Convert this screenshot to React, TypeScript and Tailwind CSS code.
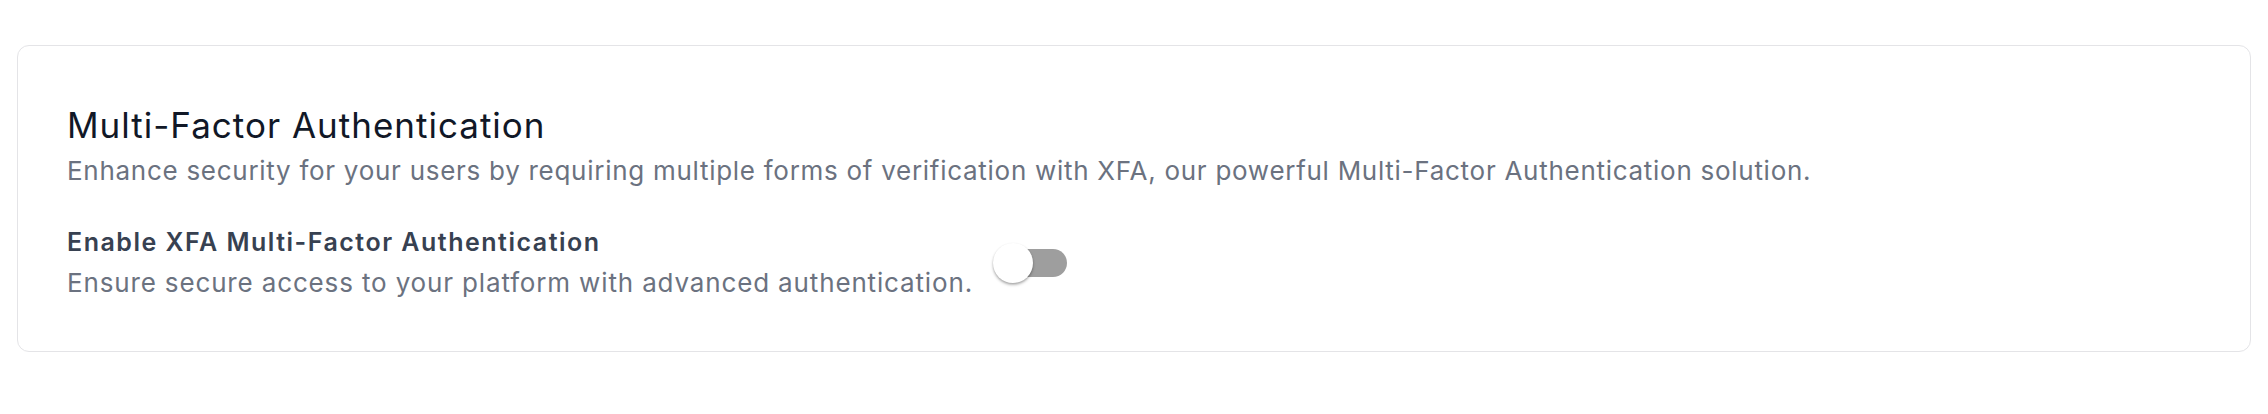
// Settings card: multi-factor authentication toggle.

import { useState } from "react";

function Toggle({ on, onChange }: { on: boolean; onChange: (v: boolean) => void }) {
  return (
    <button
      type="button"
      role="switch"
      aria-checked={on}
      onClick={() => onChange(!on)}
      className="relative h-[40px] w-[74px] shrink-0"
    >
      <span
        className={`absolute left-[6px] top-[6px] h-[28px] w-[68px] rounded-full ${on ? "bg-[#90caf9]" : "bg-[#9e9e9e]"}`}
      />
      <span
        className={`absolute top-0 h-[40px] w-[40px] rounded-full shadow-[0_2px_3px_rgba(0,0,0,0.25),0_1px_2px_rgba(0,0,0,0.14)] ${on ? "left-[34px] bg-[#1976d2]" : "left-0 bg-white"}`}
      />
    </button>
  );
}

export default function App() {
  const [enabled, setEnabled] = useState(false);

  return (
    <div className="min-h-screen bg-white px-[17px] pt-[45px] font-['Inter',sans-serif]">
      <div className="rounded-[12px] border-[1.5px] border-[#e4e4e7] bg-white pl-[49px] pr-12 pt-[58px] pb-[51px]">
        <h2 className="text-[35px] leading-[42px] font-normal tracking-[1px] text-[#111827]">
          Multi-Factor Authentication
        </h2>
        <p className="mt-[8px] text-[26px] leading-[34px] tracking-[0.72px] text-[#6b7280]">
          Enhance security for your users by requiring multiple forms of verification with XFA, our powerful
          Multi-Factor Authentication solution.
        </p>

        <div className="mt-[38px] flex items-center gap-5">
          <div>
            <p className="text-[25px] leading-[32px] font-semibold tracking-[1.5px] text-[#374151]">
              Enable XFA Multi-Factor Authentication
            </p>
            <p className="mt-[8px] text-[26px] leading-[34px] tracking-[0.85px] text-[#6b7280]">
              Ensure secure access to your platform with advanced authentication.
            </p>
          </div>
          <Toggle on={enabled} onChange={setEnabled} />
        </div>
      </div>
    </div>
  );
}
